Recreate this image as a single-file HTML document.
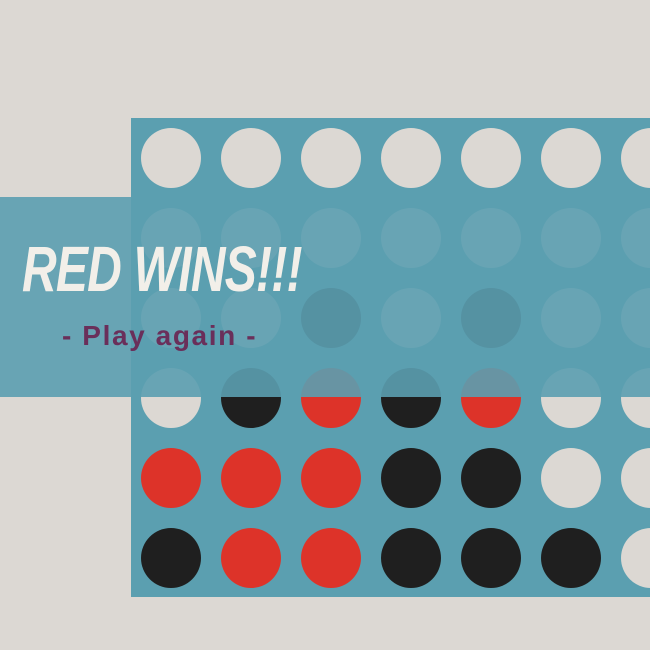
<!DOCTYPE html>
<html><head><style>
body{margin:0;width:650px;height:650px;background:#dcd8d3;position:relative;overflow:hidden;font-family:"Liberation Sans",sans-serif}
#board{position:absolute;left:131px;top:118px;width:560px;height:479px;background:#5b9fb0}
.c{position:absolute;width:60px;height:60px;border-radius:50%}
.w{background:#dcd8d3}.r{background:#dd3329}.b{background:#1f1f1f}
#ov{position:absolute;left:0;top:197px;width:650px;height:200px;background:rgba(91,159,176,0.9)}
#t{position:absolute;left:22px;top:237px;font-size:64px;font-weight:bold;font-style:italic;color:#f2efe9;transform:scaleX(0.75);transform-origin:left;letter-spacing:-1px;white-space:nowrap;line-height:64px}
#p{position:absolute;left:62px;top:320px;font-size:28px;font-weight:bold;color:#6a2f5a;white-space:nowrap;letter-spacing:1.6px}
</style></head><body>
<div id="board"></div>
<div id="g"></div>
<div id="ov"></div>
<div id="t">RED WINS!!!</div>
<div id="p">- Play again -</div>
<script>
var rows=["wwwwwww","wwwwwww","wwbwbww","wbrbrww","rrrbbww","brrbbbw"];
var h="";
for(var i=0;i<6;i++)for(var j=0;j<7;j++){
h+='<div class="c '+rows[i][j]+'" style="left:'+(141+80*j)+'px;top:'+(128+80*i)+'px"></div>';}
document.getElementById("g").outerHTML=h;
</script>
</body></html>
